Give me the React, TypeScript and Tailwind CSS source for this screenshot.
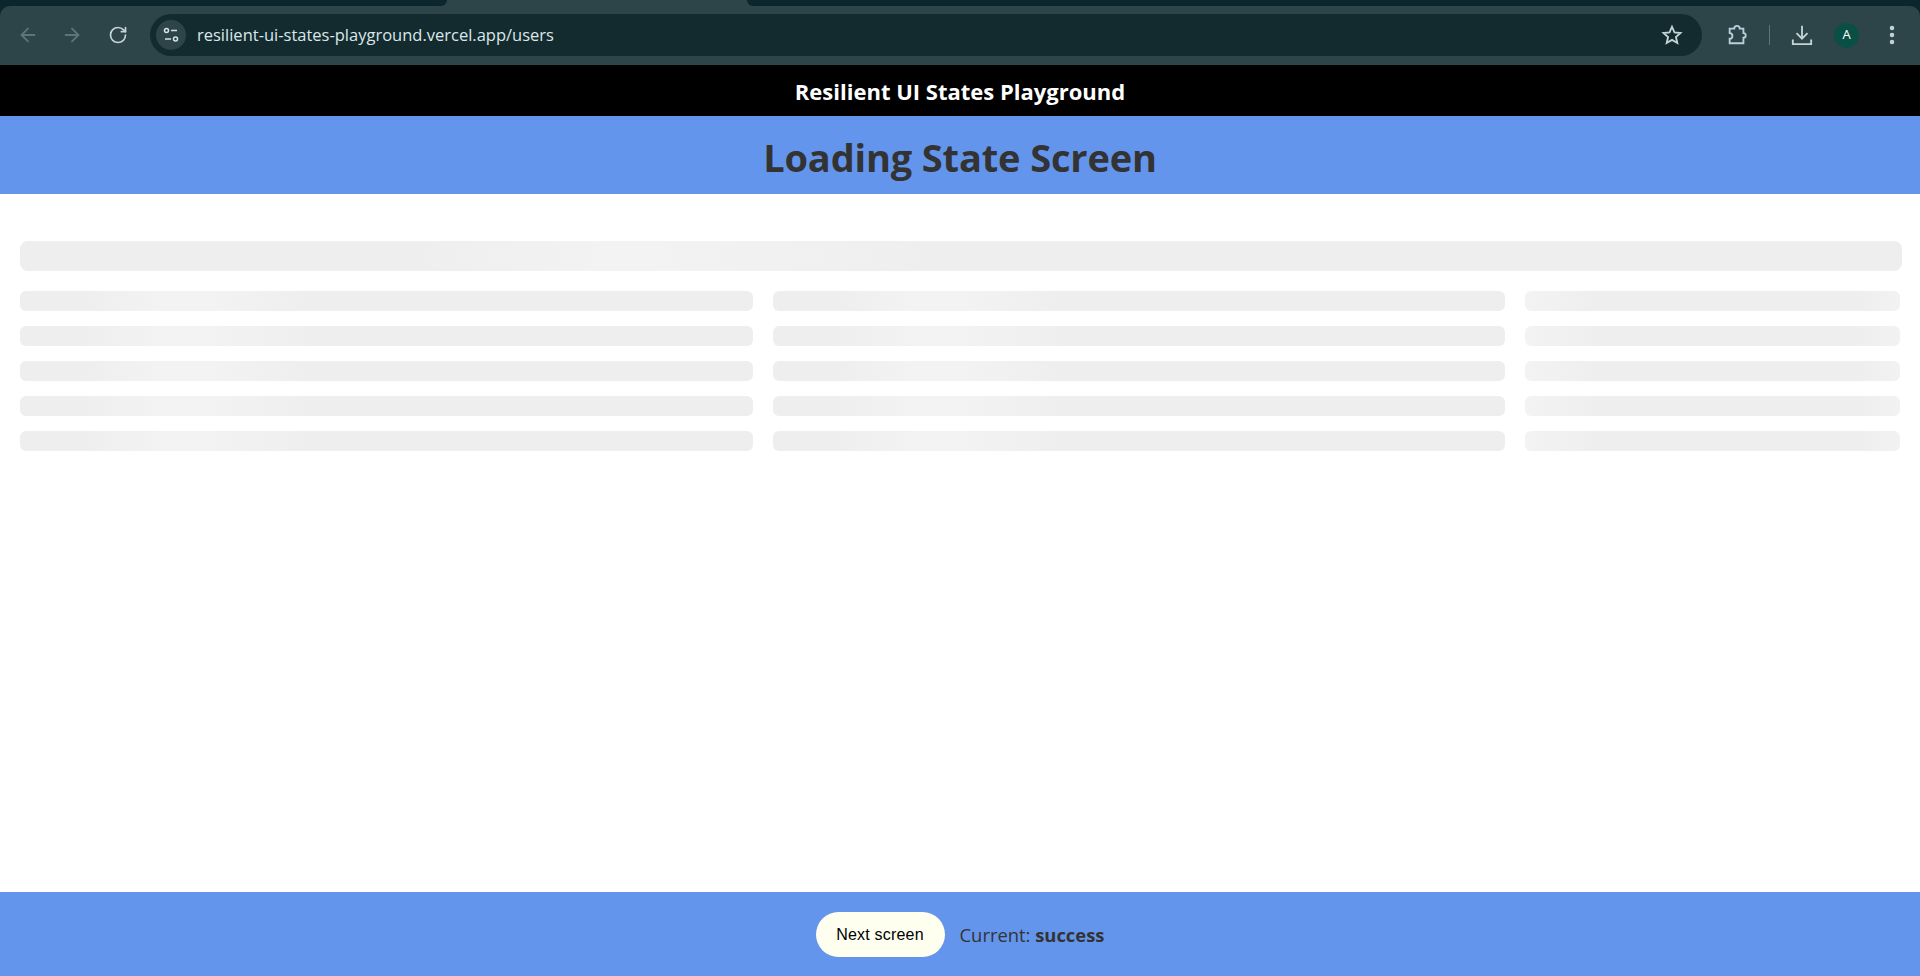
import { ArrowLeft, ArrowRight, RotateCw, EllipsisVertical } from "lucide-react";

const rowLeft = "bg-[linear-gradient(90deg,#eeeeee_8%,#f3f3f3_20%,#f3f3f3_25%,#eeeeee_40%)]";
const rowRight = "bg-[linear-gradient(90deg,#f3f3f3_0%,#eeeeee_20%,#eeeeee_88%,#f2f2f2_100%)]";

const rows = [0, 1, 2, 3, 4];

function Toolbar() {
  return (
    <div className="h-[65px] bg-[#0b262c] flex flex-col">
      <div className="h-[6px] flex bg-[#2d4548]">
        <div className="w-[447px] bg-[#0b262c] rounded-br-[8px]" />
        <div className="w-[300px]" />
        <div className="flex-1 bg-[#0b262c] rounded-bl-[8px]" />
      </div>
      <div className="flex-1 bg-[#2d4548] rounded-t-[10px] flex items-center pl-[17px] pb-[1px]">
        <ArrowLeft className="w-[22px] h-[22px] text-[#5f7477]" strokeWidth={2} />
        <ArrowRight className="w-[22px] h-[22px] text-[#5f7477] ml-[22px]" strokeWidth={2} />
        <RotateCw className="w-[20px] h-[20px] text-[#c3d4d8] ml-[25px]" strokeWidth={2} />
        <div className="ml-[22px] w-[1552px] h-[42px] shrink-0 rounded-full bg-[#132b2e] flex items-center pl-[6px]">
          <div className="w-[30px] h-[30px] rounded-full bg-[#2d4548] flex items-center justify-center">
            <svg viewBox="0 0 16 16" className="w-[16px] h-[16px]" fill="none" stroke="#d5e3e6" strokeWidth="1.5">
              <circle cx="3.5" cy="3.5" r="2" />
              <path d="M8 3.5h6" />
              <path d="M2 12h6" />
              <circle cx="12.5" cy="12" r="2" />
            </svg>
          </div>
          <span className="ml-[11px] pt-[1px] text-[16.5px] text-[#dbe7ea]">
            resilient-ui-states-playground.vercel.app/users
          </span>
          <svg viewBox="0 0 24 24" className="ml-auto mr-[19px] w-[22px] h-[22px]" fill="none" stroke="#c3d4d8" strokeWidth="2">
            <path d="M12 3l2.7 6.1 6.6.7-5 4.4 1.5 6.5-5.8-3.4-5.8 3.4 1.5-6.5-5-4.4 6.6-.7z" />
          </svg>
        </div>
        <svg viewBox="0 0 24 24" className="ml-[24px] w-[22px] h-[22px]" fill="none" stroke="#b9d0dc" strokeWidth="2">
          <path d="M4 5h5a3 3 0 0 1 6 0h4v5a2.5 2.5 0 0 1 0 5v6H4v-5a3 3 0 0 0 0-6z" />
        </svg>
        <div className="ml-[21px] w-px h-[20px] bg-[#5f7477]" />
        <svg viewBox="0 0 24 24" className="ml-[21px] w-[22px] h-[22px]" fill="none" stroke="#c3d4d8" strokeWidth="2">
          <path d="M12 2v14" />
          <path d="M6 10l6 6 6-6" />
          <path d="M2 17v5h20v-5" />
        </svg>
        <div className="ml-[21px] w-[25px] h-[25px] rounded-full bg-[#0a4f45] flex items-center justify-center text-[13px] text-white">
          A
        </div>
        <EllipsisVertical className="ml-[21px] w-[24px] h-[24px] text-[#c3d4d8]" strokeWidth={2.5} />
      </div>
    </div>
  );
}

export default function App() {
  return (
    <div className="h-[976px] flex flex-col bg-white font-['Open_Sans','Noto_Sans',sans-serif]">
      <Toolbar />
      <header className="h-[51px] pt-[2px] bg-black flex items-center justify-center text-white text-[22px] font-bold">
        Resilient UI States Playground
      </header>
      <div className="h-[78px] pt-[4px] bg-[#6495ed] flex items-center justify-center text-[#333] text-[38px] font-bold tracking-[-0.15px]">
        Loading State Screen
      </div>
      <main className="flex-1 pt-[47px] pl-[20px] pr-[18px]">
        <div className="h-[30px] rounded-[8px] bg-[linear-gradient(90deg,#eeeeee_20%,#f3f3f3_32%,#eeeeee_50%)]" />
        <div className="mt-[20px] flex flex-col gap-[15px]">
          {rows.map((r) => (
            <div key={r} className="grid grid-cols-[733px_732px_375px] gap-[20px]">
              <div className={`h-[20px] rounded-[6px] ${rowLeft}`} />
              <div className={`h-[20px] rounded-[6px] ${rowLeft}`} />
              <div className={`h-[20px] rounded-[6px] ${rowRight}`} />
            </div>
          ))}
        </div>
      </main>
      <footer className="h-[84px] bg-[#6495ed] flex items-center justify-center gap-[15px]">
        <button className="w-[129px] h-[45px] pt-[1px] rounded-full bg-[#fffff0] text-black text-[16px] tracking-[0.2px] font-['Liberation_Sans',sans-serif]">
          Next screen
        </button>
        <span className="pt-[2px] text-[#333] text-[18.4px]">
          Current: <strong>success</strong>
        </span>
      </footer>
    </div>
  );
}
